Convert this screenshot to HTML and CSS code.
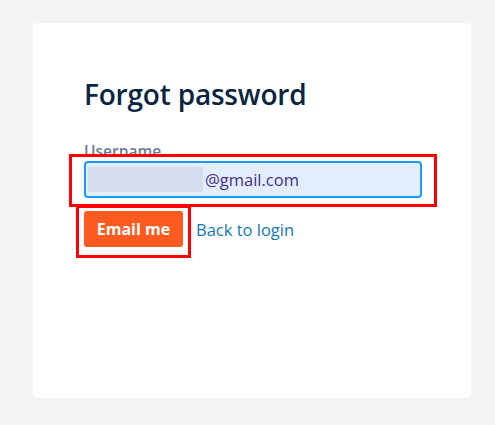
FILE: index.html
```html
<!DOCTYPE html>
<html lang="en">
<head>
    <meta charset="UTF-8">
    <meta name="viewport" content="width=device-width, initial-scale=1.0">
    <title>Forgot password</title>
    <link rel="stylesheet" href="styles.css">
</head>
<body>
    <div class="card">
        <h1>Forgot password</h1>
        <form class="form">
            <label for="username">Username</label>
            <div class="field">
                <div class="input" id="username">
                    <span class="blur"></span>
                    <span class="value">@gmail.com</span>
                </div>
                <div class="mark mark-input"></div>
            </div>
            <div class="actions">
                <div class="btn-wrap">
                    <button type="button">Email me</button>
                    <div class="mark mark-btn"></div>
                </div>
                <a href="#" class="back">Back to login</a>
            </div>
        </form>
    </div>
</body>
</html>
```

FILE: styles.css
```css
html, body {
    margin: 0;
    height: 100%;
}
body {
    font-family: "Open Sans", "Noto Sans", sans-serif;
    background-color: #f3f4f6;
    padding: 23px 24px 0 33px;
    box-sizing: border-box;
}
.card {
    width: 438px;
    height: 375px;
    box-sizing: border-box;
    background-color: white;
    border-radius: 5px;
    padding: 53px 50px 0 51px;
}
h1 {
    margin: 0;
    font-size: 28px;
    font-weight: 600;
    line-height: 36px;
    color: #0a2540;
    letter-spacing: -0.2px;
}
.form {
    margin-top: 30px;
}
label {
    display: block;
    font-size: 15.5px;
    font-weight: 600;
    color: #6b7c93;
    line-height: 18px;
}
.field {
    position: relative;
    margin-top: 1px;
}
.input {
    width: 338px;
    height: 37px;
    box-sizing: border-box;
    border: 2px solid #1a9bf5;
    border-radius: 4px;
    background-color: #e3eefc;
    display: flex;
    align-items: center;
    padding: 4px 2px;
}
.blur {
    width: 115px;
    align-self: stretch;
    background-color: #d4def0;
}
.value {
    margin-left: 2px;
    font-size: 16.5px;
    color: #43308f;
}
.mark {
    position: absolute;
    border: 3px solid #ff0000;
}
.mark-input {
    left: -15px;
    top: -7px;
    width: 362px;
    height: 47px;
}
.actions {
    display: flex;
    align-items: center;
    margin-top: 13px;
}
.btn-wrap {
    position: relative;
}
button {
    display: block;
    width: 99px;
    height: 36px;
    padding: 0;
    background-color: #ff5a1f;
    color: white;
    border: none;
    border-radius: 3px;
    font-family: inherit;
    font-size: 16px;
    font-weight: 700;
}
.mark-btn {
    left: -8px;
    top: -6px;
    width: 109px;
    height: 47px;
}
.back {
    margin-left: 13px;
    font-size: 16.5px;
    color: #1379b8;
    text-decoration: none;
}
```
